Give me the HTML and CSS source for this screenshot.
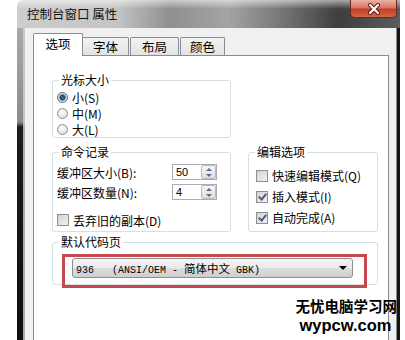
FILE: index.html
```html
<!DOCTYPE html>
<html lang="zh-CN">
<head>
  <meta charset="UTF-8">
  <meta name="viewport" content="width=device-width, initial-scale=1" />
  <title>控制台窗口 属性</title>
  <link rel="stylesheet" href="styles.css">
</head>
<body>
  <div class="window">
    <div class="titlebar">
      <span class="title">控制台窗口 属性</span>
      <span class="close" aria-label="关闭">
        <svg width="16" height="12" viewBox="0 0 16 12">
          <path d="M4 2 L12 10 M12 2 L4 10" stroke="#5a1a12" stroke-width="4" stroke-linecap="round"/>
          <path d="M4 2 L12 10 M12 2 L4 10" stroke="#fff" stroke-width="2.2" stroke-linecap="round"/>
        </svg>
      </span>
    </div>
    <div class="frame">
      <div class="edge-left"></div>
      <div class="client">
        <div class="tabs">
          <span class="tab active">选项</span>
          <span class="tab t2">字体</span>
          <span class="tab t3">布局</span>
          <span class="tab t4">颜色</span>
        </div>
        <div class="panel">
          <fieldset class="group cursor">
            <legend>光标大小</legend>
            <label class="opt"><span class="radio on"></span>小(S)</label>
            <label class="opt"><span class="radio"></span>中(M)</label>
            <label class="opt"><span class="radio"></span>大(L)</label>
          </fieldset>
          <div class="row">
            <fieldset class="group history">
              <legend>命令记录</legend>
              <div class="field">
                <span class="field-label">缓冲区大小(B):</span>
                <span class="spin"><span class="num">50</span><span class="btns"><i class="up"></i><i class="down"></i></span></span>
              </div>
              <div class="field">
                <span class="field-label">缓冲区数量(N):</span>
                <span class="spin"><span class="num">4</span><span class="btns"><i class="up"></i><i class="down"></i></span></span>
              </div>
              <label class="check-row discard"><span class="box"></span>丢弃旧的副本(D)</label>
            </fieldset>
            <fieldset class="group edit">
              <legend>编辑选项</legend>
              <label class="check-row"><span class="box"></span>快速编辑模式(Q)</label>
              <label class="check-row"><span class="box on"></span>插入模式(I)</label>
              <label class="check-row"><span class="box on"></span>自动完成(A)</label>
            </fieldset>
          </div>
          <fieldset class="group codepage">
            <legend>默认代码页</legend>
            <div class="mark">
              <div class="select">
                <span class="value">936   (ANSI/OEM - <span class="cjk">简体中文</span> GBK)</span>
                <span class="arrow"></span>
              </div>
            </div>
          </fieldset>
        </div>
      </div>
      <div class="edge-right"></div>
    </div>
  </div>
  <div class="watermark">
    <div class="wm-cn">无忧电脑学习网</div>
    <div class="wm-en">wypcw.com</div>
  </div>
</body>
</html>
```

FILE: styles.css
```css
body {
  margin: 0;
  width: 405px;
  height: 340px;
  overflow: hidden;
  position: relative;
  background: #fff;
  font-family: "Noto Sans CJK SC", "DejaVu Sans", sans-serif;
  font-size: 12px;
  color: #000;
}
.window {
  margin-left: 17px;
  width: 383px;
  height: 340px;
  display: flex;
  flex-direction: column;
}
.titlebar {
  height: 28px;
  display: flex;
  align-items: flex-start;
  border-top-left-radius: 6px;
  background:
    linear-gradient(to bottom, rgba(255,255,255,0.55) 0, rgba(255,255,255,0) 9px),
    linear-gradient(to right, #cdcdcd 0, #c4c4c4 26%, #8f8f8f 40%, #a4a4a4 55%, #7a7a7a 68%, #3e3e3e 84%, #5c5c5c 100%);
}
.title {
  padding: 6px 0 0 10px;
  font-size: 12.5px;
  line-height: 16px;
  color: #111;
}
.close {
  margin-left: auto;
  margin-right: 3px;
  width: 47px;
  height: 18px;
  box-sizing: border-box;
  border: 1px solid #6b2a20;
  border-top: none;
  border-radius: 0 0 5px 5px;
  background: linear-gradient(to bottom, #eab2a4 0, #d8775f 45%, #c23e25 55%, #d7674a 100%);
  display: flex;
  align-items: center;
  justify-content: center;
}
.frame {
  flex: 1;
  display: flex;
}
.edge-left {
  width: 8px;
  background:
    linear-gradient(to right, rgba(0,0,0,0) 6px, rgba(210,210,210,0.8) 6px),
    linear-gradient(to bottom, #a9a9a9 0, #8b8b8b 94px, #1c1c1c 99px, #0e0e0e 100%);
}
.edge-right {
  width: 4px;
  background: linear-gradient(to right, #8a8a8a 1px, #141414 1px);
}
.client {
  flex: 1;
  background: #f0f0f0;
  padding: 5px 7px 0 8px;
  display: flex;
  flex-direction: column;
}
.tabs {
  height: 22px;
  display: flex;
  align-items: flex-end;
}
.tab {
  box-sizing: border-box;
  height: 18px;
  border: 1px solid #898c95;
  border-bottom: none;
  border-radius: 2px 2px 0 0;
  background: linear-gradient(to bottom, #f3f3f3, #e3e3e3);
  text-align: center;
  line-height: 17px;
  font-size: 12.5px;
}
.tab.active {
  position: relative;
  z-index: 1;
  width: 50px;
  height: 23px;
  margin-bottom: -1px;
  background: #fff;
  line-height: 20px;
}
.t2 { width: 47px; margin-left: -1px; }
.t3 { width: 49px; margin-left: 1px; }
.t4 { width: 45px; margin-left: 1px; }
.panel {
  flex: 1;
  background: #fff;
  border: 1px solid #898c95;
  border-bottom: none;
  padding: 16px 10px 0 18px;
}
.group {
  margin: 0;
  min-width: 0;
  box-sizing: border-box;
  border: 1px solid #d5dfe5;
  border-radius: 3px;
  padding: 1px 4px 0;
}
.group legend {
  margin-left: 2px;
  padding: 0 2px;
  line-height: 16px;
}
.cursor { width: 179px; }
.opt {
  display: flex;
  align-items: center;
  gap: 4px;
  height: 16px;
}
.radio {
  width: 11px;
  height: 11px;
  box-sizing: border-box;
  border-radius: 50%;
  border: 1px solid #8e8f8f;
  background: radial-gradient(circle at 40% 35%, #fff 0, #e6e6e6 60%, #cfcfcf 100%);
}
.radio.on {
  background: radial-gradient(circle, #3d6f97 0, #1b4a73 2.5px, #c6d2dc 3.5px, #f0f0f0 100%);
  border-color: #5a6b7a;
}
.row {
  display: flex;
  gap: 17px;
  margin-top: 6px;
}
.history {
  width: 179px;
  padding: 2px 4px 1px;
}
.edit {
  width: 130px;
  padding: 5px 4px 3px;
}
.field {
  display: flex;
  align-items: center;
  height: 20px;
}
.field-label { width: 115px; }
.spin {
  display: flex;
  width: 45px;
  height: 16px;
  box-sizing: border-box;
  border: 1px solid #abadb3;
  background: #fff;
}
.spin .num {
  flex: 1;
  padding-left: 3px;
  font-family: "Liberation Sans", sans-serif;
  font-size: 11px;
  line-height: 14px;
}
.spin .btns {
  width: 13px;
  display: flex;
  flex-direction: column;
  border: 1px solid #b9b9b9;
  border-radius: 2px;
  background: linear-gradient(to bottom, #f6f6f6, #dedede);
}
.spin .btns i {
  flex: 1;
  display: flex;
  align-items: center;
  justify-content: center;
}
.spin .up::before,
.spin .down::before {
  content: "";
  border-left: 3px solid transparent;
  border-right: 3px solid transparent;
}
.spin .up::before { border-bottom: 3px solid #5a6f8c; }
.spin .down::before { border-top: 3px solid #5a6f8c; }
.check-row {
  display: flex;
  align-items: center;
  gap: 4px;
  height: 21px;
}
.discard {
  height: 20px;
  margin-top: 8px;
}
.edit .box { margin-left: 3px; }
.box {
  width: 12px;
  height: 12px;
  box-sizing: border-box;
  border: 1px solid #8f8f8f;
  background: linear-gradient(135deg, #d2d2d2, #f2f2f2);
  position: relative;
}
.box.on::after {
  content: "";
  position: absolute;
  left: 3px;
  top: 0;
  width: 3px;
  height: 6px;
  border: solid #4b5f86;
  border-width: 0 2px 2px 0;
  transform: rotate(40deg);
}
.codepage { margin-top: 2px; }
.mark {
  width: 305px;
  box-sizing: border-box;
  margin: 3px 0 -4px 5px;
  padding: 1px 11px 7px 7px;
  border: 3px solid #c9484d;
}
.select {
  height: 20px;
  box-sizing: border-box;
  border: 1px solid #8e8f8f;
  border-radius: 3px;
  padding-left: 3px;
  display: flex;
  align-items: center;
  background: linear-gradient(to bottom, #f3f3f3 0, #ebebeb 50%, #dddddd 50%, #cfcfcf 100%);
}
.value {
  white-space: pre;
  font-family: "Liberation Mono", monospace;
  font-size: 10px;
}
.value .cjk {
  font-family: "Noto Sans CJK SC", sans-serif;
  font-size: 11.5px;
}
.arrow {
  margin-left: auto;
  margin-right: 5px;
  border-top: 4px solid #000;
  border-left: 4px solid transparent;
  border-right: 4px solid transparent;
}
.watermark {
  position: absolute;
  right: 8px;
  bottom: 5px;
  font-weight: bold;
}
.wm-cn {
  font-size: 14.5px;
  line-height: 21px;
}
.wm-en {
  margin-left: 4px;
  font-family: "Liberation Sans", sans-serif;
  font-size: 16.5px;
  line-height: 19px;
}
```
